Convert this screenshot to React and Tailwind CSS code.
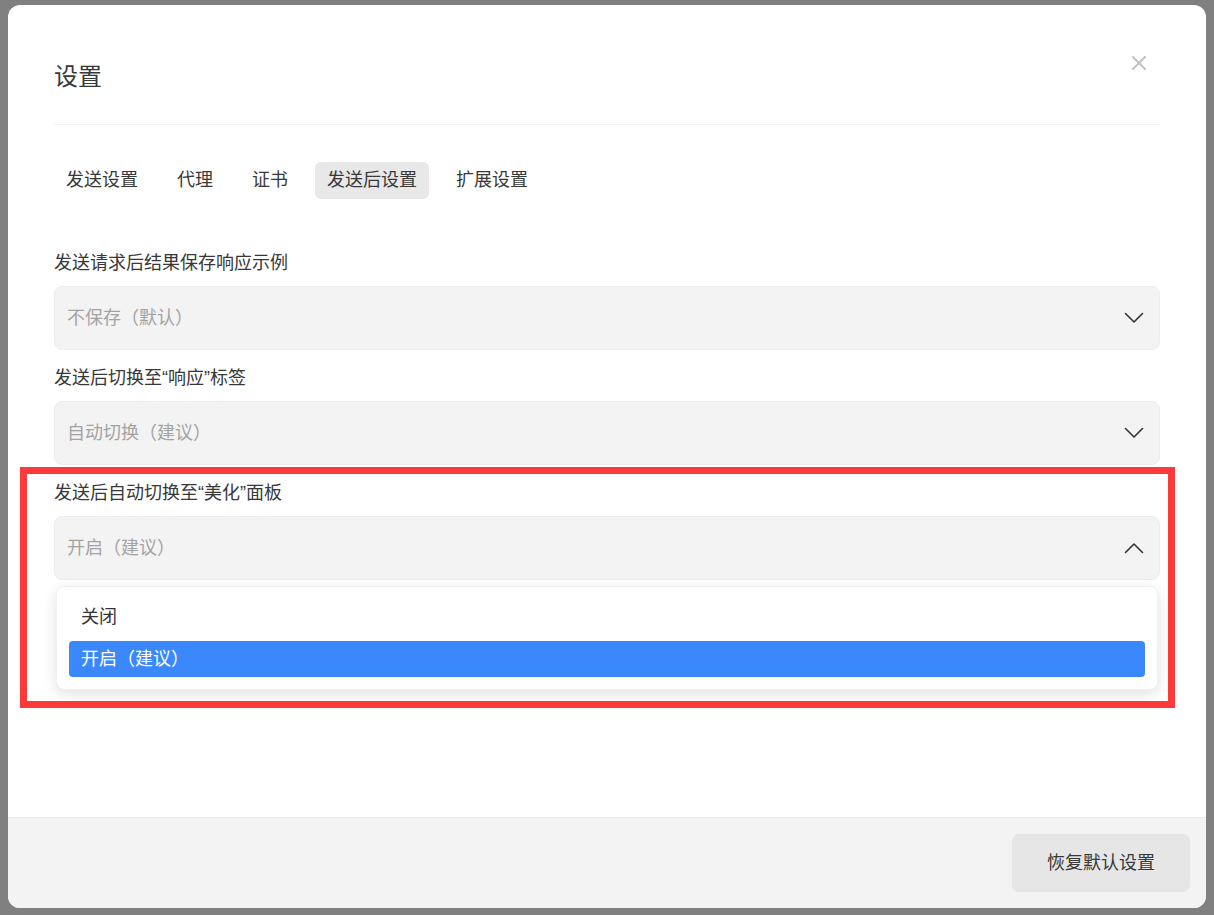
import React, { useState } from 'react';

// Latin font first so the curly quotes stay narrow; CJK glyphs fall through
const font = { fontFamily: '"Liberation Sans", "Noto Sans CJK SC", sans-serif' };

const tabs = ['发送设置', '代理', '证书', '发送后设置', '扩展设置'];

const Chevron = ({ up }) => (
  <svg width="20" height="12" viewBox="0 0 20 12" fill="none" className="shrink-0">
    <path
      d={up ? 'M1.5 10.5 L10 2 L18.5 10.5' : 'M1.5 1.5 L10 10 L18.5 1.5'}
      stroke="#333"
      strokeWidth="1.6"
      strokeLinecap="round"
      strokeLinejoin="round"
    />
  </svg>
);

const Field = ({ label, value, open, children }) => (
  <div className="flex flex-col">
    <div className="h-[26px] leading-[26px] text-[18px] text-[#383838] mb-[10px]">{label}</div>
    <div className="relative">
      <div className="h-[64px] rounded-[8px] bg-[#f3f3f3] border border-[#ededed] flex items-center justify-between pl-[12px] pr-[15px]">
        <span className="text-[18px] text-[#a3a3a3]">{value}</span>
        <Chevron up={open} />
      </div>
      {children}
    </div>
  </div>
);

export default function App() {
  const [active] = useState(3);

  return (
    <div style={font} className="w-[1214px] h-[915px] bg-[#808080] overflow-hidden pt-[5px] pl-[8px]">
      <div className="relative w-[1198px] h-[903px] bg-white rounded-[12px] flex flex-col overflow-hidden">
        <div className="flex-1 px-[46px] pt-[55px]">
          <div className="flex items-start justify-between">
            <h1 className="text-[24px] leading-[33px] text-[#383838]">设置</h1>
            <svg width="14" height="14" viewBox="0 0 14 14" className="-mt-[4px] mr-[14px]">
              <path d="M1 1 L13 13 M13 1 L1 13" stroke="#c2c2c2" strokeWidth="2" strokeLinecap="round" />
            </svg>
          </div>
          <div className="mt-[31px] h-px bg-[#f2f2f2]" />

          <div className="mt-[37px] flex gap-[15px]">
            {tabs.map((t, i) => (
              <div
                key={t}
                className={`h-[37px] px-[12px] flex items-center rounded-[6px] text-[18px] text-[#383838] ${i === active ? 'bg-[#e8e8e8]' : ''}`}
              >
                {t}
              </div>
            ))}
          </div>

          <div className="mt-[51px] flex flex-col gap-[15px]">
            <Field label="发送请求后结果保存响应示例" value="不保存（默认）" />
            <Field label="发送后切换至“响应”标签" value="自动切换（建议）" />
            <Field label="发送后自动切换至“美化”面板" value="开启（建议）" open>
              <div className="absolute left-[2px] right-[2px] top-[70px] z-10 bg-white rounded-[8px] border border-[#f0f0f0] shadow-[0_4px_14px_rgba(0,0,0,0.12)] p-[12px] flex flex-col gap-[6px]">
                <div className="h-[36px] px-[12px] flex items-center text-[18px] text-[#333]">关闭</div>
                <div className="h-[36px] px-[12px] flex items-center rounded-[4px] bg-[#3b88fd] text-[18px] text-white">开启（建议）</div>
              </div>
            </Field>
          </div>
        </div>

        <div className="h-[91px] shrink-0 bg-[#f3f3f3] border-t border-[#ececec] flex items-center justify-end pr-[16px]">
          <button className="w-[178px] h-[58px] rounded-[7px] bg-[#e6e6e6] text-[18px] text-[#383838]">恢复默认设置</button>
        </div>

        {/* annotation frame */}
        <div className="absolute left-[12px] top-[462px] w-[1155px] h-[241px] border-[7px] border-[#fc3a3a] z-20 pointer-events-none" />
      </div>
    </div>
  );
}
